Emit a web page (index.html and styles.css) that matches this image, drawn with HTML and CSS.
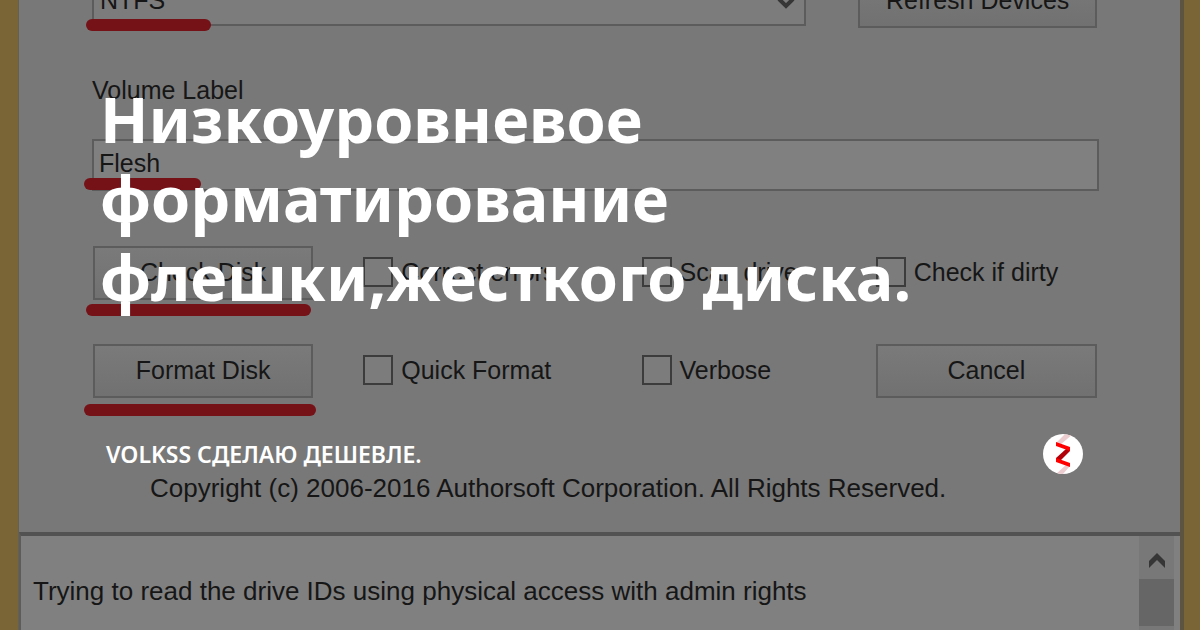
FILE: index.html
```html
<!DOCTYPE html>
<html lang="ru">
<head>
<meta charset="utf-8">
<meta name="viewport" content="width=device-width, initial-scale=1">
<title>Низкоуровневое форматирование флешки,жесткого диска.</title>
<link rel="stylesheet" href="styles.css">
</head>
<body>
<main class="cover">
  <form class="dialog" lang="en">
    <div class="settings">
      <div class="device-row">
        <div class="field marked mark-system">
          <select class="box" aria-label="File system"><option>NTFS</option></select>
          <svg class="chevron" viewBox="0 0 18 12" aria-hidden="true"><path d="M2 2l7 7 7-7"/></svg>
        </div>
        <button class="button" type="button">Refresh Devices</button>
      </div>
      <label class="label" for="volume">Volume Label</label>
      <div class="field marked mark-volume">
        <input class="box volume" id="volume" type="text" value="Flesh">
      </div>
      <div class="actions">
        <div class="marked mark-check"><button class="button" type="button">Check Disk</button></div>
        <label class="option"><input type="checkbox">Correct errors</label>
        <label class="option"><input type="checkbox">Scan drive</label>
        <label class="option"><input type="checkbox">Check if dirty</label>
        <div class="marked mark-format"><button class="button" type="button">Format Disk</button></div>
        <label class="option"><input type="checkbox">Quick Format</label>
        <label class="option"><input type="checkbox">Verbose</label>
        <button class="button" type="button">Cancel</button>
      </div>
      <p class="copyright">Copyright (c) 2006-2016 Authorsoft Corporation. All Rights Reserved.</p>
    </div>
    <div class="log">
      <p class="log-text">Trying to read the drive IDs using physical access with admin rights</p>
      <div class="scrollbar">
        <svg class="arrow" viewBox="0 0 18 16" aria-hidden="true"><path d="M1 8l8-8 8 8v7l-8-8-8 8z"/></svg>
        <div class="thumb"></div>
      </div>
    </div>
  </form>
  <div class="overlay">
    <h1 class="title">Низкоуровневое форматирование флешки,жесткого диска.</h1>
    <div class="footer">
      <span class="author">VOLKSS СДЕЛАЮ ДЕШЕВЛЕ.</span>
      <svg class="logo" viewBox="0 0 40 40" role="img" aria-label="Zen">
        <defs><clipPath id="disc"><circle cx="20" cy="20" r="20"/></clipPath></defs>
        <g clip-path="url(#disc)">
          <path fill="#fff" d="M0 0h40v40H0z"/>
          <path fill="#eccccf" d="M13 9L22 0h8L17 11zM13 40l11-10 3 2-7 8z"/>
          <path fill="#b0000a" d="M27 13v4L16 28l-3-1v-3l10-9z"/>
          <path fill="#f00" d="M13 8l14 5v4l-14-5zM13 24l14 5v4l-14-5z"/>
        </g>
      </svg>
    </div>
  </div>
</main>
</body>
</html>
```
FILE: styles.css
```css
* {
  box-sizing: border-box;
}

body {
  margin: 0;
  background: #787878;
}

.cover {
  position: relative;
  display: flex;
  min-height: 100vh;
  overflow: hidden;
}

.dialog {
  flex: 1;
  display: flex;
  flex-direction: column;
  background: #787878;
  border: solid #796536;
  border-width: 0 16px 0 18px;
  box-shadow: inset 1px 0 #66604f, inset -4px 0 #5c5340;
  color: #161616;
  font: 25px/32px "Liberation Sans", Arial, sans-serif;
}

.settings {
  padding: 0 85px 0 74px;
}

.device-row {
  display: grid;
  grid-template-columns: 715fr 239fr;
  gap: 52px;
  margin: -26px 2px 0 0;
}

.field {
  display: flex;
}

.marked {
  position: relative;
}

.box,
.button {
  width: 100%;
  border: 2px solid #5c5c5c;
  border-radius: 0;
  color: inherit;
  font: inherit;
}

.box {
  height: 52px;
  padding: 0 6px;
  appearance: none;
  background: #7c7c7c;
}

.volume {
  background: #808080;
  padding: 0 5px 4px;
}

.button {
  height: 54px;
  padding: 0 0 2px;
  background: linear-gradient(#7a7a7a, #717171);
}

.chevron {
  position: absolute;
  top: 23px;
  right: 11px;
  width: 18px;
  height: 12px;
  fill: none;
  stroke: #363636;
  stroke-width: 4;
}

/* Red marker strokes drawn over the controls */
.marked::after {
  content: "";
  position: absolute;
  height: 12px;
  border-radius: 6px;
  background: #751218;
}

.mark-system::after {
  left: -6px;
  top: 45px;
  width: 125px;
}

.mark-volume::after {
  left: -8px;
  top: 39px;
  width: 117px;
}

.mark-check::after {
  left: -7px;
  top: 58px;
  width: 225px;
}

.mark-format::after {
  left: -9px;
  top: 60px;
  width: 232px;
}

.label {
  display: block;
  margin: 46px 0 33px;
}

.actions {
  display: grid;
  grid-template-columns: 220fr 228fr 184fr 221fr;
  column-gap: 50px;
  row-gap: 44px;
  margin: 55px 2px 0 1px;
}

.option {
  display: flex;
  align-items: center;
  gap: 8px;
  padding-bottom: 2px;
  white-space: nowrap;
}

.option input {
  appearance: none;
  flex: none;
  width: 30px;
  height: 30px;
  margin: 0;
  border: 2px solid #3c3c3c;
  border-radius: 0;
  background: #7c7c7c;
}

.copyright {
  margin: 74px 0 28px 58px;
  font-size: 26px;
}

.log {
  flex: 1;
  display: flex;
  justify-content: space-between;
  margin: 0 4px 0 1px;
  padding-right: 6px;
  border-top: 4px solid #525252;
  border-left: 2px solid #5c5c5c;
  background: #808080;
}

.log-text {
  margin: 39px 0 0 12px;
  font-size: 26px;
}

.scrollbar {
  width: 35px;
  background: #787878;
}

.arrow {
  display: block;
  width: 18px;
  height: 16px;
  margin: 17px auto 10px;
  fill: #363636;
}

.thumb {
  height: 47px;
  background: #666;
}

.overlay {
  position: absolute;
  inset: 0;
  padding: 79px 100px;
  color: #fff;
  font-family: "Noto Sans", sans-serif;
}

.title {
  margin: 0;
  font-size: 63px;
  font-weight: 700;
  line-height: 79px;
}

.footer {
  display: flex;
  justify-content: space-between;
  align-items: center;
  margin-top: 118px;
  padding: 0 17px 0 6px;
}

.author {
  font-size: 23px;
  font-weight: 600;
  line-height: 30px;
}

.logo {
  width: 40px;
  height: 40px;
}
```
